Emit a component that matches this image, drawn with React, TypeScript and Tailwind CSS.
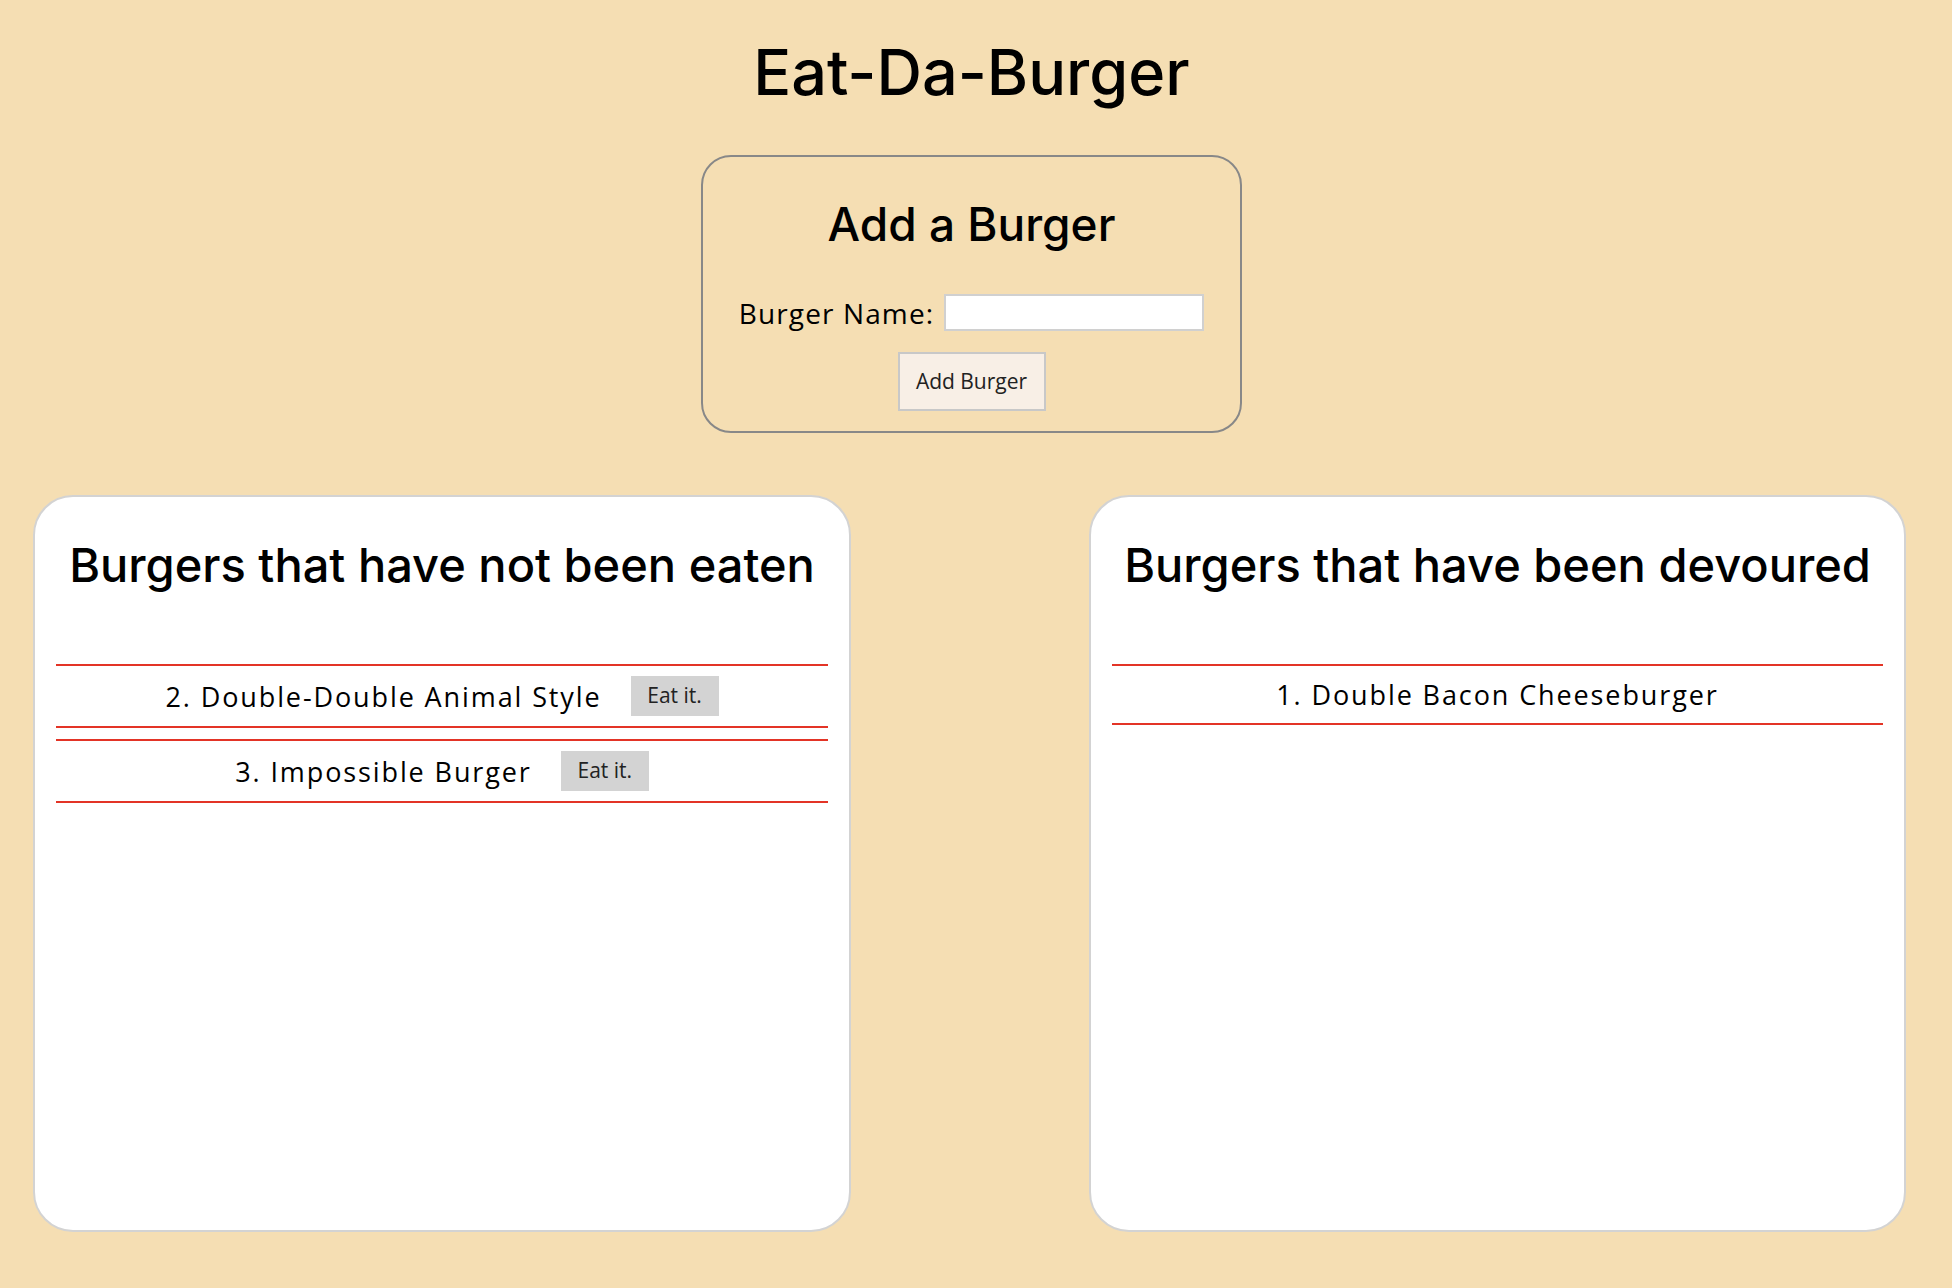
import React from "react";

const notEaten = [
  { id: 2, name: "Double-Double Animal Style" },
  { id: 3, name: "Impossible Burger" },
];

const devoured = [{ id: 1, name: "Double Bacon Cheeseburger" }];

const heading = { fontFamily: "Inter, 'Noto Sans', sans-serif" };

const BurgerRow = ({
  id,
  name,
  eat,
}: {
  id: number;
  name: string;
  eat?: boolean;
}) => (
  <li className="flex items-center justify-center gap-[29px] border-y-2 border-[#e33426] py-[10px] mb-[11px]">
    <span className="text-[27px] leading-[37px] tracking-[0.07em] text-black">
      {id}. {name}
    </span>
    {eat && (
      <button className="h-[40px] w-[88px] bg-[#d3d3d3] text-[21px] text-[#222]">
        Eat it.
      </button>
    )}
  </li>
);

export default function App() {
  return (
    <div
      className="min-h-screen bg-[#f5deb3] pb-[56px] pr-[9px]"
      style={{ fontFamily: "'Open Sans', Lato, sans-serif" }}
    >
      <h1
        className="pt-[41px] text-center text-[63px] font-medium leading-none text-black"
        style={heading}
      >
        Eat-Da-Burger
      </h1>

      {/* add a burger */}
      <div className="mx-auto mt-[51px] flex h-[278px] w-[541px] flex-col items-center rounded-[30px] border-2 border-[#888] pt-[44px]">
        <h2 className="text-[46px] font-medium leading-none text-black" style={heading}>
          Add a Burger
        </h2>
        <div className="mt-[47px] flex items-center gap-[10px]">
          <label className="text-[28px] leading-none tracking-[0.04em] text-black">
            Burger Name:
          </label>
          <input
            type="text"
            className="h-[37px] w-[260px] border-2 border-[#d0d0d0] bg-white"
          />
        </div>
        <button className="mt-[21px] h-[59px] w-[148px] border-2 border-[#c8c8c8] bg-[#f8efe6] text-[21px] text-[#222]">
          Add Burger
        </button>
      </div>

      {/* lists */}
      <div className="mt-[62px] flex justify-between pl-[33px] pr-[37px]">
        <div className="h-[737px] w-[818px] rounded-[40px] border-2 border-[#d3d3d3] bg-white px-[21px] pt-[44px]">
          <h2
            className="text-center text-[47px] font-medium leading-none text-black"
            style={heading}
          >
            Burgers that have not been eaten
          </h2>
          <ul className="mt-[76px]">
            {notEaten.map((b) => (
              <BurgerRow key={b.id} id={b.id} name={b.name} eat />
            ))}
          </ul>
        </div>
        <div className="h-[737px] w-[817px] rounded-[40px] border-2 border-[#d3d3d3] bg-white px-[21px] pt-[44px]">
          <h2
            className="text-center text-[47px] font-medium leading-none text-black"
            style={heading}
          >
            Burgers that have been devoured
          </h2>
          <ul className="mt-[76px]">
            {devoured.map((b) => (
              <BurgerRow key={b.id} id={b.id} name={b.name} />
            ))}
          </ul>
        </div>
      </div>
    </div>
  );
}
